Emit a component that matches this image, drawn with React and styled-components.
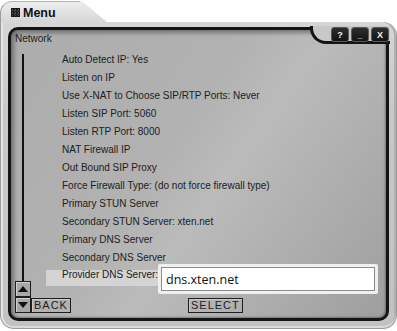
import React from 'react';
import styled, { createGlobalStyle } from 'styled-components';

const items = [
  'Auto Detect IP: Yes',
  'Listen on IP',
  'Use X-NAT to Choose SIP/RTP Ports: Never',
  'Listen SIP Port: 5060',
  'Listen RTP Port: 8000',
  'NAT Firewall IP',
  'Out Bound SIP Proxy',
  'Force Firewall Type: (do not force firewall type)',
  'Primary STUN Server',
  'Secondary STUN Server: xten.net',
  'Primary DNS Server',
  'Secondary DNS Server',
];

const App = () => {
  return (
    <>
      <GlobalStyle />
      <Window>
        <TabRow>
          <Tab>
            <MenuIcon />
            <Title>Menu</Title>
          </Tab>
        </TabRow>
        <Frame>
          <Panel>
            <Cap>
              <WinButton>?</WinButton>
              <WinButton>_</WinButton>
              <WinButton>X</WinButton>
            </Cap>
            <Heading>Network</Heading>
            <Body>
              <Rail>
                <Track />
                <ArrowButton><Triangle up /></ArrowButton>
                <ArrowButton><Triangle /></ArrowButton>
              </Rail>
              <Main>
                <List>
                  {items.map((text) => (
                    <Row key={text}>{text}</Row>
                  ))}
                  <EditRow>
                    <EditLabel>Provider DNS Server:</EditLabel>
                    <InputGlow>
                      <InputBox>dns.xten.net</InputBox>
                    </InputGlow>
                  </EditRow>
                </List>
                <Footer>
                  <SoftKey>BACK</SoftKey>
                  <SoftKey offset={117}>SELECT</SoftKey>
                </Footer>
              </Main>
            </Body>
          </Panel>
        </Frame>
      </Window>
    </>
  );
};

const GlobalStyle = createGlobalStyle`
  html, body {
    margin: 0;
    padding: 0;
    background: #ffffff;
    font-family: "Liberation Sans", Arial, sans-serif;
  }
`;

const Window = styled.div`
  width: 397px;
  height: 331px;
  display: flex;
  flex-direction: column;
`;

const TabRow = styled.div`
  height: 22px;
  display: flex;
  align-items: flex-end;
`;

const Tab = styled.div`
  position: relative;
  width: 80px;
  height: 21px;
  display: flex;
  align-items: center;
  gap: 3px;
  padding-left: 10px;
  box-sizing: border-box;
  border-radius: 12px 0 0 0;
  border-left: 1px solid #9c9c9c;
  border-top: 1px solid #b4b4b4;
  background: linear-gradient(#ededed, #d6d6d6);
  &::after {
    content: '';
    position: absolute;
    left: 79px;
    top: -1px;
    width: 28px;
    height: 22px;
    background: linear-gradient(#ededed, #d6d6d6);
    clip-path: polygon(0 0, 6% 0, 30% 25%, 100% 100%, 0 100%);
  }
`;

const MenuIcon = styled.span`
  width: 9px;
  height: 9px;
  margin-top: 1px;
  background:
    repeating-conic-gradient(#1a1a1a 0 25%, #4a4a4a 0 50%) 0 0 / 3px 3px;
  border: 1px solid #1a1a1a;
  box-sizing: border-box;
`;

const Title = styled.span`
  font-size: 12.5px;
  font-weight: bold;
  color: #111;
  margin-top: 1px;
`;

const Frame = styled.div`
  height: 307px;
  box-sizing: border-box;
  padding: 5px 7px 6px 7px;
  border: 1px solid #9c9c9c;
  border-top: none;
  border-radius: 0 14px 14px 14px;
  background: linear-gradient(#d6d6d6, #c8c8c8 30%, #c2c2c2 100%);
  box-shadow: inset 2px 0 0 #e4e4e4, inset 0 -2px 0 #dadada, inset -2px 0 0 #b0b0b0;
`;

const Panel = styled.div`
  position: relative;
  height: 294px;
  box-sizing: border-box;
  border: 3px solid #141414;
  border-radius: 10px;
  display: flex;
  flex-direction: column;
  background: linear-gradient(125deg, #acacac 0%, #b2b2b2 42%, #bbbbbb 55%, #9e9e9e 100%);
  box-shadow: inset 3px 3px 4px rgba(0, 0, 0, 0.35), inset -1px -1px 2px rgba(0, 0, 0, 0.3);
`;

const Cap = styled.div`
  position: absolute;
  top: -4px;
  right: -4px;
  width: 80px;
  height: 18px;
  box-sizing: border-box;
  display: flex;
  justify-content: flex-end;
  align-items: flex-start;
  gap: 2px;
  padding: 1px 1px 0 0;
  background: #c8c8c8;
  border-left: 3px solid #141414;
  border-bottom: 3px solid #141414;
  border-bottom-left-radius: 16px;
`;

const WinButton = styled.div`
  width: 18px;
  height: 15px;
  box-sizing: border-box;
  display: flex;
  align-items: center;
  justify-content: center;
  border-radius: 3px;
  border: 1px solid #5a5a5a;
  background: linear-gradient(#2e2e2e, #141414);
  color: #f2f2f2;
  font-size: 9px;
  font-weight: bold;
  position: relative;
  z-index: 1;
`;

const Heading = styled.div`
  font-size: 10px;
  line-height: 12px;
  color: #1a1a1a;
  padding: 3px 0 0 4px;
`;

const Body = styled.div`
  flex: 1;
  display: flex;
  padding-left: 4px;
`;

const Rail = styled.div`
  width: 16px;
  display: flex;
  flex-direction: column;
  align-items: center;
  padding: 9px 0 5px;
  box-sizing: border-box;
`;

const Track = styled.div`
  flex: 1;
  width: 2px;
  background: #111;
`;

const ArrowButton = styled.div`
  width: 16px;
  height: 16px;
  box-sizing: border-box;
  display: flex;
  align-items: center;
  justify-content: center;
  border: 1px solid #1e1e1e;
  box-shadow: inset 1px 1px 0 #d0d0d0;
  background: #a8a8a8;
`;

const Triangle = styled.span`
  width: 0;
  height: 0;
  border-left: 5px solid transparent;
  border-right: 5px solid transparent;
  ${(props) => (props.up ? 'border-bottom: 6px solid #111;' : 'border-top: 6px solid #111;')}
`;

const Main = styled.div`
  flex: 1;
  display: flex;
  flex-direction: column;
  justify-content: space-between;
  padding-bottom: 5px;
`;

const List = styled.div`
  display: flex;
  flex-direction: column;
  padding: 6px 0 0 15px;
`;

const Row = styled.div`
  height: 18px;
  line-height: 18px;
  padding-left: 16px;
  font-size: 10px;
  color: #202020;
  white-space: nowrap;
`;

const EditRow = styled.div`
  display: flex;
  align-items: flex-start;
`;

const EditLabel = styled.div`
  width: 114px;
  height: 16px;
  margin-top: 3px;
  box-sizing: border-box;
  padding: 0 0 6px 16px;
  line-height: 10px;
  font-size: 10px;
  color: #202020;
  white-space: nowrap;
  background: #d4d4d4;
`;

const InputGlow = styled.div`
  width: 220px;
  height: 30px;
  margin: -3px 0 0 -2px;
  box-sizing: border-box;
  padding: 3px;
  border-radius: 2px;
  background: #f0f0f0;
`;

const InputBox = styled.div`
  height: 100%;
  box-sizing: border-box;
  border: 1px solid #8c8c8c;
  background: #ffffff;
  padding-left: 4px;
  display: flex;
  align-items: center;
  font-family: "Open Sans", "DejaVu Sans", sans-serif;
  font-size: 12.5px;
  color: #111;
`;

const Footer = styled.div`
  display: flex;
  align-items: center;
`;

const SoftKey = styled.div`
  margin-left: ${(props) => props.offset || 0}px;
  height: 15px;
  box-sizing: border-box;
  padding: 0 2px;
  border: 1px solid #1e1e1e;
  box-shadow: inset 1px 1px 0 #c8c8c8;
  font-size: 11px;
  line-height: 13px;
  letter-spacing: 1px;
  color: #1e1e1e;
`;

export default App;
